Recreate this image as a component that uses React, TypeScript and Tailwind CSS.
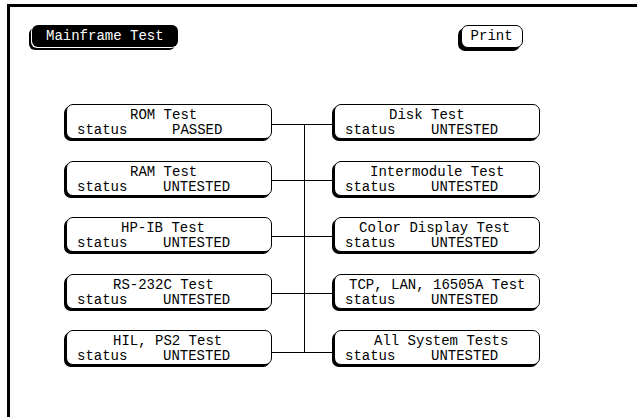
import React from "react";

type Cell = { title: string; pad: string; value: string };

const rows: { left: Cell; right: Cell; h: number; lineY: number }[] = [
  {
    left: { title: "ROM Test", pad: "pl-[53px]", value: "PASSED" },
    right: { title: "Disk Test", pad: "pl-[44px]", value: "UNTESTED" },
    h: 57,
    lineY: 20,
  },
  {
    left: { title: "RAM Test", pad: "pl-[53px]", value: "UNTESTED" },
    right: { title: "Intermodule Test", pad: "pl-[25px]", value: "UNTESTED" },
    h: 56,
    lineY: 19,
  },
  {
    left: { title: "HP-IB Test", pad: "pl-[44px]", value: "UNTESTED" },
    right: { title: "Color Display Test", pad: "pl-[14px]", value: "UNTESTED" },
    h: 57,
    lineY: 19,
  },
  {
    left: { title: "RS-232C Test", pad: "pl-[36px]", value: "UNTESTED" },
    right: { title: "TCP, LAN, 16505A Test", pad: "pl-[4px]", value: "UNTESTED" },
    h: 56,
    lineY: 19,
  },
  {
    left: { title: "HIL, PS2 Test", pad: "pl-[36px]", value: "UNTESTED" },
    right: { title: "All System Tests", pad: "pl-[29px]", value: "UNTESTED" },
    h: 57,
    lineY: 22,
  },
];

function TestBox({ cell }: { cell: Cell }) {
  return (
    <div className="w-[206px] h-[35px] shrink-0 rounded-[7px] border border-black bg-white shadow-[-2px_2px_0_0_#000] pl-[10px] pt-[3px] text-[14px] leading-[15px] whitespace-pre">
      <div className={cell.pad}>{cell.title}</div>
      <div className="flex">
        <span className="w-[86px]">status</span>
        <span className={cell.value === "PASSED" ? "pl-[9px]" : ""}>{cell.value}</span>
      </div>
    </div>
  );
}

function Connector({ h, y, first, last }: { h: number; y: number; first: boolean; last: boolean }) {
  return (
    <svg width={62} height={h} className="block shrink-0">
      <line x1={0} y1={y + 0.5} x2={62} y2={y + 0.5} stroke="#000" strokeWidth={1} />
      <line
        x1={32.5}
        y1={first ? y : 0}
        x2={32.5}
        y2={last ? y + 1 : h}
        stroke="#000"
        strokeWidth={1}
      />
    </svg>
  );
}

export default function App() {
  return (
    <div className="w-[637px] h-[417px] bg-white overflow-hidden pl-[7px] pt-[4px] font-['Liberation_Mono',monospace] text-black">
      <div className="h-full border-t-[3px] border-l-[3px] border-black">
        {/* header */}
        <div className="flex items-start mt-[18px] ml-[22px]">
          <div className="h-[22px] rounded-[6px] bg-black text-white px-[14px] text-[14px] leading-[22px] shadow-[-1px_1px_0_0_#fff,-3px_3px_0_0_#000] whitespace-pre">
            Mainframe Test
          </div>
          <div className="ml-[283px] w-[62px] h-[23px] rounded-[7px] border border-black bg-white text-center text-[14px] leading-[21px] shadow-[-3px_3px_0_0_#000]">
            Print
          </div>
        </div>

        {/* test grid */}
        <div className="mt-[56px] ml-[56px] flex flex-col">
          {rows.map((r, i) => (
            <div key={i} className="flex items-start" style={{ height: r.h }}>
              <TestBox cell={r.left} />
              <Connector h={r.h} y={r.lineY} first={i === 0} last={i === rows.length - 1} />
              <TestBox cell={r.right} />
            </div>
          ))}
        </div>
      </div>
    </div>
  );
}
